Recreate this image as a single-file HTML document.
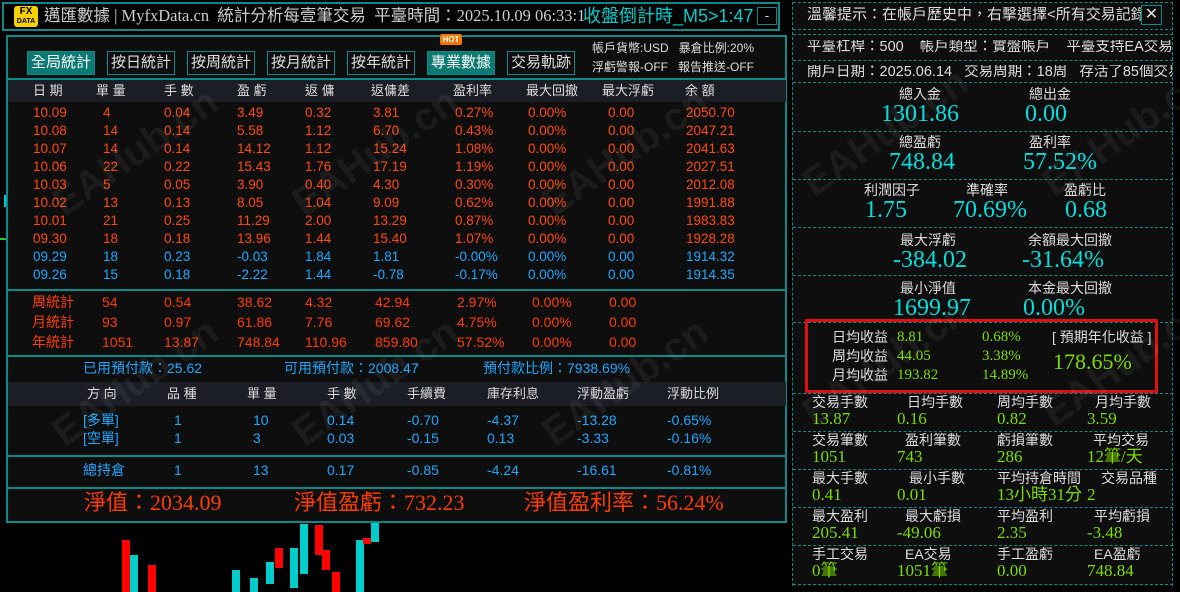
<!DOCTYPE html>
<html><head><meta charset="utf-8"><style>
*{margin:0;padding:0;box-sizing:border-box}
body{width:1180px;height:592px;background:#000;position:relative;overflow:hidden;font-family:"Liberation Sans","Noto Sans CJK TC",sans-serif;font-size:13px;color:#ddd}
.a{position:absolute;white-space:nowrap;line-height:1}
.box{position:absolute;border:2px solid #0c8a8a}
.r{color:#ff4a10}.b{color:#1ea8ff}.c{color:#00dede}.g{color:#7cdc00}
.btn{position:absolute;top:51px;height:24px;width:68px;border:1px solid #0c8a8a;color:#ddd;font-size:15px;text-align:center;line-height:22px}
.on{background:#0a7a72;color:#fff}
.dl{position:absolute;border-top:1px dashed #0c8a8a;left:793px;width:380px}
.ser{font-family:"Liberation Serif","Noto Sans CJK TC",serif}
.cen{transform:translateX(-50%)}
.wm{position:absolute;font-size:40px;font-weight:bold;color:rgba(255,255,255,.06);transform:rotate(-35deg);font-family:"Liberation Sans",sans-serif}
.cd{position:absolute;width:8px}
</style></head><body>
<div class="cd" style="left:122px;top:540px;height:52px;background:#f00"></div>
<div class="cd" style="left:130px;top:555px;height:37px;background:#0cc"></div>
<div class="cd" style="left:148px;top:565px;height:27px;background:#f00"></div>
<div class="cd" style="left:232px;top:570px;height:22px;background:#0cc"></div>
<div class="cd" style="left:250px;top:578px;height:14px;background:#0cc"></div>
<div class="cd" style="left:266px;top:562px;height:22px;background:#0cc"></div>
<div class="cd" style="left:275px;top:548px;height:20px;background:#f00"></div>
<div class="cd" style="left:290px;top:548px;height:40px;background:#0cc"></div>
<div class="cd" style="left:300px;top:524px;height:50px;background:#0cc"></div>
<div class="cd" style="left:315px;top:525px;height:30px;background:#f00"></div>
<div class="cd" style="left:322px;top:550px;height:20px;background:#f00"></div>
<div class="cd" style="left:332px;top:572px;height:20px;background:#f00"></div>
<div class="cd" style="left:356px;top:540px;height:52px;background:#0cc"></div>
<div class="cd" style="left:363px;top:538px;height:6px;background:#f00"></div>
<div class="cd" style="left:371px;top:522px;height:20px;background:#0cc"></div>
<div style="position:absolute;left:0;top:238px;width:8px;height:2px;background:#2c2"></div>
<div style="position:absolute;left:4px;top:195px;width:5px;height:12px;background:#0cc"></div>
<div class="box" style="left:2px;top:2px;width:778px;height:29px;"></div>
<div class="a" style="left:14px;top:6px;width:24px;height:21px;background:#f6d000;border-radius:3px;color:#000;font-weight:bold;font-size:10px;text-align:center;line-height:9px;padding-top:1px">FX<br><span style="font-size:7px">DATA</span></div>
<div class="a ser" style="left:44px;top:8px;font-size:16.5px;color:#ccc">邁匯數據 | MyfxData.cn&nbsp; 統計分析每壹筆交易&nbsp; 平臺時間：2025.10.09 06:33:1</div>
<div class="a" style="left:583px;top:7px;font-size:18px;color:#0cc">收盤倒計時_M5&gt;1:47</div>
<div class="a" style="left:757px;top:7px;width:20px;height:18px;border:1px solid #0c8a8a;text-align:center;line-height:15px">-</div>
<div class="box" style="left:6px;top:35px;width:781px;height:488px;background:#0e0e0e"></div>
<div class="btn on" style="left:27px">全局統計</div>
<div class="btn" style="left:107px">按日統計</div>
<div class="btn" style="left:187px">按周統計</div>
<div class="btn" style="left:267px">按月統計</div>
<div class="btn" style="left:347px">按年統計</div>
<div class="btn on" style="left:427px">專業數據</div>
<div class="btn" style="left:507px">交易軌跡</div>
<div class="a" style="left:440px;top:34px;width:22px;height:11px;background:#f07800;border-radius:2px;color:#fff;font-size:8px;font-weight:bold;text-align:center;line-height:11px">HOT</div>
<div class="a" style="left:592px;top:42px;font-size:12px">帳戶貨幣:USD&nbsp;&nbsp; 暴倉比例:20%</div>
<div class="a" style="left:592px;top:61px;font-size:12px">浮虧警報-OFF&nbsp;&nbsp; 報告推送-OFF</div>
<div style="position:absolute;left:8px;top:78px;width:778px;height:2px;background:#0c8a8a"></div>
<div style="position:absolute;left:8px;top:80px;width:778px;height:22px;background:#1c1e26"></div>
<div class="a" style="top:84px;left:33px">日 期</div><div class="a" style="top:84px;left:96px">單 量</div><div class="a" style="top:84px;left:164px">手 數</div><div class="a" style="top:84px;left:237px">盈 虧</div><div class="a" style="top:84px;left:305px">返 傭</div><div class="a" style="top:84px;left:371px">返傭差</div><div class="a" style="top:84px;left:453px">盈利率</div><div class="a" style="top:84px;left:526px">最大回撤</div><div class="a" style="top:84px;left:602px">最大浮虧</div><div class="a" style="top:84px;left:685px">余 額</div>
<div id="rows"></div>
<div style="position:absolute;left:8px;top:289px;width:778px;height:2px;background:#0c8a8a"></div>
<div style="position:absolute;left:8px;top:355px;width:778px;height:2px;background:#0c8a8a"></div>
<div style="position:absolute;left:8px;top:382px;width:778px;height:24px;background:#1c1e26"></div>
<div style="position:absolute;left:8px;top:455px;width:778px;height:2px;background:#0c8a8a"></div>
<div style="position:absolute;left:8px;top:487px;width:778px;height:2px;background:#0c8a8a"></div>
<div class="a b" style="left:83px;top:361px;font-size:14px">已用預付款：25.62</div>
<div class="a b" style="left:284px;top:361px;font-size:14px">可用預付款：2008.47</div>
<div class="a b" style="left:483px;top:361px;font-size:14px">預付款比例：7938.69%</div>
<div class="a" style="top:387px;left:87px">方 向</div><div class="a" style="top:387px;left:167px">品 種</div><div class="a" style="top:387px;left:247px">單 量</div><div class="a" style="top:387px;left:327px">手 數</div><div class="a" style="top:387px;left:407px">手續費</div><div class="a" style="top:387px;left:487px">庫存利息</div><div class="a" style="top:387px;left:577px">浮動盈虧</div><div class="a" style="top:387px;left:667px">浮動比例</div>
<div class="a ser" style="left:84px;top:492px;font-size:22px;color:#ff3c00">淨值：2034.09</div>
<div class="a ser" style="left:294px;top:492px;font-size:22px;color:#ff3c00">淨值盈虧：732.23</div>
<div class="a ser" style="left:524px;top:492px;font-size:22px;color:#ff3c00">淨值盈利率：56.24%</div>
<div style="position:absolute;left:792px;top:2px;width:381px;height:584px;border-left:1px dashed #0c8a8a;border-right:1px dashed #0c8a8a;background:#0e0e0e"></div>
<div class="dl" style="top:2px"></div><div class="dl" style="top:29px"></div><div class="dl" style="top:34px"></div><div class="dl" style="top:60px"></div><div class="dl" style="top:82px"></div><div class="dl" style="top:131px"></div><div class="dl" style="top:179px"></div><div class="dl" style="top:227px"></div><div class="dl" style="top:275px"></div><div class="dl" style="top:322px"></div><div class="dl" style="top:393px"></div><div class="dl" style="top:431px"></div><div class="dl" style="top:469px"></div><div class="dl" style="top:507px"></div><div class="dl" style="top:545px"></div><div class="dl" style="top:584px"></div>
<div class="a" style="left:807px;top:7px;font-size:15px;width:355px;overflow:hidden">溫馨提示：在帳戶歷史中，右擊選擇&lt;所有交易記錄</div>
<div class="a" style="left:1141px;top:5px;width:21px;height:20px;border:1px solid #0c8a8a;background:#0e0e0e;text-align:center;font-size:16px;line-height:18px">✕</div>
<div class="a" style="left:807px;top:40px;font-size:14.5px;width:365px;overflow:hidden">平臺杠桿：500&nbsp;&nbsp;&nbsp; 帳戶類型：實盤帳戶&nbsp;&nbsp;&nbsp; 平臺支持EA交易</div>
<div class="a" style="left:807px;top:65px;font-size:14.5px;width:365px;overflow:hidden">開戶日期：2025.06.14&nbsp;&nbsp; 交易周期：18周&nbsp;&nbsp; 存活了85個交易日</div>
<div id="rp"></div>
<div style="position:absolute;left:805px;top:319px;width:353px;height:74px;border:3px solid #e01010"></div>
<div class="wm" style="left:40px;top:130px">EAHub.cn</div><div class="wm" style="left:280px;top:130px">EAHub.cn</div><div class="wm" style="left:530px;top:130px">EAHub.cn</div>
<div class="wm" style="left:40px;top:360px">EAHub.cn</div><div class="wm" style="left:280px;top:360px">EAHub.cn</div><div class="wm" style="left:530px;top:360px">EAHub.cn</div>
<div class="wm" style="left:790px;top:110px">EAHub.cn</div><div class="wm" style="left:1030px;top:110px">EAHub.cn</div><div class="wm" style="left:790px;top:340px">EAHub.cn</div><div class="wm" style="left:1030px;top:340px">EAHub.cn</div>
<script>
var h='';
var X=[33,103,164,237,305,373,455,528,608,686];
var D=[["10.09","4","0.04","3.49","0.32","3.81","0.27%","0.00%","0.00","2050.70"],["10.08","14","0.14","5.58","1.12","6.70","0.43%","0.00%","0.00","2047.21"],["10.07","14","0.14","14.12","1.12","15.24","1.08%","0.00%","0.00","2041.63"],["10.06","22","0.22","15.43","1.76","17.19","1.19%","0.00%","0.00","2027.51"],["10.03","5","0.05","3.90","0.40","4.30","0.30%","0.00%","0.00","2012.08"],["10.02","13","0.13","8.05","1.04","9.09","0.62%","0.00%","0.00","1991.88"],["10.01","21","0.25","11.29","2.00","13.29","0.87%","0.00%","0.00","1983.83"],["09.30","18","0.18","13.96","1.44","15.40","1.07%","0.00%","0.00","1928.28"],["09.29","18","0.23","-0.03","1.84","1.81","-0.00%","0.00%","0.00","1914.32"],["09.26","15","0.18","-2.22","1.44","-0.78","-0.17%","0.00%","0.00","1914.35"]];
D.forEach(function(r,i){r.forEach(function(v,j){h+='<div class="a '+(i<8?'r':'b')+'" style="font-size:13.5px;left:'+X[j]+'px;top:'+(106+i*18)+'px">'+v+'</div>';});});
var S=[["周統計","54","0.54","38.62","4.32","42.94","2.97%","0.00%","0.00"],["月統計","93","0.97","61.86","7.76","69.62","4.75%","0.00%","0.00"],["年統計","1051","13.87","748.84","110.96","859.80","57.52%","0.00%","0.00"]];
var SX=[32,102,164,237,305,375,457,532,609];
S.forEach(function(r,i){r.forEach(function(v,j){h+='<div class="a" style="color:#ff3c00;font-size:14px;left:'+SX[j]+'px;top:'+(295+i*20)+'px">'+v+'</div>';});});
var P=[["[多單]","1","10","0.14","-0.70","-4.37","-13.28","-0.65%",413],["[空單]","1","3","0.03","-0.15","0.13","-3.33","-0.16%",431],["總持倉","1","13","0.17","-0.85","-4.24","-16.61","-0.81%",463]];
var PX=[83,174,253,327,407,487,577,667];
P.forEach(function(r){for(var j=0;j<8;j++)h+='<div class="a b" style="font-size:14px;left:'+PX[j]+'px;top:'+r[8]+'px">'+r[j]+'</div>';});
document.getElementById('rows').innerHTML=h;
var q='';
function L(t,x,y,cls,fs){q+='<div class="a '+(cls||'')+'" style="left:'+x+'px;top:'+y+'px;font-size:'+(fs||13)+'px">'+t+'</div>';}
function C(t,x,y,cls,fs){q+='<div class="a cen '+(cls||'')+'" style="left:'+x+'px;top:'+y+'px;font-size:'+(fs||14)+'px">'+t+'</div>';}
C("總入金",920,87);C("總出金",1050,87);C("1301.86",920,102,"c ser",24);C("0.00",1046,102,"c ser",24);
C("總盈虧",920,135);C("盈利率",1050,135);C("748.84",922,150,"c ser",24);C("57.52%",1060,150,"c ser",24);
C("利潤因子",892,183);C("準確率",987,183);C("盈虧比",1085,183);C("1.75",886,198,"c ser",24);C("70.69%",990,198,"c ser",24);C("0.68",1086,198,"c ser",24);
C("最大浮虧",928,233);C("余額最大回撤",1070,233);C("-384.02",930,248,"c ser",24);C("-31.64%",1063,248,"c ser",24);
C("最小淨值",928,281);C("本金最大回撤",1070,281);C("1699.97",932,296,"c ser",24);C("0.00%",1054,296,"c ser",24);
var rr=[["日均收益","8.81","0.68%"],["周均收益","44.05","3.38%"],["月均收益","193.82","14.89%"]];
rr.forEach(function(r,i){var y=330+i*19;L(r[0],832,y,"",14);L(r[1],897,y,"g ser",15);L(r[2],982,y,"g ser",15);});
L("[ 預期年化收益 ]",1052,330,"",14);L("178.65%",1053,351,"g ser",22);
var G=[[["交易手數","13.87"],["日均手數","0.16"],["周均手數","0.82"],["月均手數","3.59"]],[["交易筆數","1051"],["盈利筆數","743"],["虧損筆數","286"],["平均交易","12筆/天"]],[["最大手數","0.41"],["最小手數","0.01"],["平均持倉時間","13小時31分"],["交易品種","2"]],[["最大盈利","205.41"],["最大虧損","-49.06"],["平均盈利","2.35"],["平均虧損","-3.48"]],[["手工交易","0筆"],["EA交易","1051筆"],["手工盈虧","0.00"],["EA盈虧","748.84"]]];
var LX=[[812,907,997,1095],[812,905,997,1093],[812,909,997,1101],[812,905,997,1094],[812,905,997,1094]];
var VX=[812,897,997,1087];
G.forEach(function(r,i){var y=395+i*38;r.forEach(function(c,j){L(c[0],LX[i][j],y,"",14);L(c[1],VX[j],y+15,"g ser",17);});});
document.getElementById('rp').innerHTML=q;
</script>
</body></html>
